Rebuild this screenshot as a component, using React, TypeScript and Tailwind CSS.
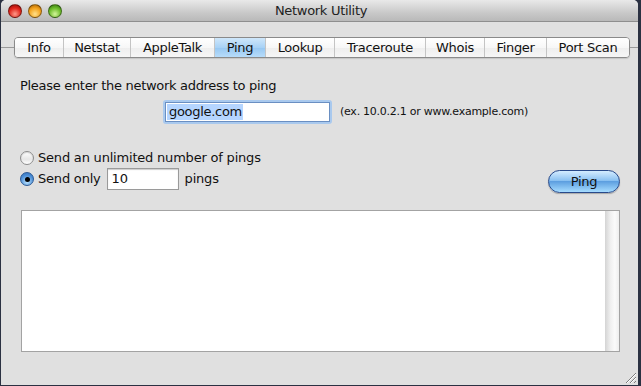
const tabs = [
  { label: "Info", w: "w-[48px]" },
  { label: "Netstat", w: "w-[67px]" },
  { label: "AppleTalk", w: "w-[84px]" },
  { label: "Ping", w: "w-[51px]", active: true },
  { label: "Lookup", w: "w-[69px]" },
  { label: "Traceroute", w: "w-[91px]" },
  { label: "Whois", w: "w-[59px]" },
  { label: "Finger", w: "w-[62px]" },
  { label: "Port Scan", w: "w-[83px]" },
];

function Light({ color }: { color: string }) {
  return <div className={`h-[14px] w-[14px] rounded-full border border-black/40 ${color}`} />;
}

function Radio({ checked }: { checked?: boolean }) {
  if (checked) {
    return (
      <div className="flex h-[14px] w-[14px] items-center justify-center rounded-full border border-[#2d5a95] bg-[radial-gradient(circle_at_50%_75%,#b9e2ff,#4d8fd6_60%,#2f6cb8)]">
        <div className="h-[5px] w-[5px] rounded-full bg-black" />
      </div>
    );
  }
  return (
    <div className="h-[14px] w-[14px] rounded-full border border-[#8d8d8d] bg-[linear-gradient(#ffffff,#e6e6e6_60%,#ffffff)] shadow-[inset_0_1px_1px_rgba(0,0,0,0.15)]" />
  );
}

export default function App() {
  return (
    <div className="h-[386px] w-[641px] bg-[#2b3142] font-['DejaVu_Sans',sans-serif] text-[#111]">
      <div className="relative ml-[1px] flex h-[385px] w-[637px] flex-col overflow-hidden rounded-t-[5px] bg-[#e0e0e0]">
        {/* Title bar */}
        <div className="relative flex h-[22px] items-center border-b border-[#8e8e8e] bg-[linear-gradient(#e9e9e9,#c9c9c9_60%,#b9b9b9)] pl-[7px]">
          <div className="flex gap-[6px]">
            <Light color="bg-[radial-gradient(circle_at_50%_75%,#ff9a8a,#e0251b_55%,#8c0a06)]" />
            <Light color="bg-[radial-gradient(circle_at_50%_75%,#ffe08a,#f3a21c_55%,#a05a00)]" />
            <Light color="bg-[radial-gradient(circle_at_50%_75%,#d3f59a,#6cbc2a_55%,#2f6d0c)]" />
          </div>
          <div className="flex-1 pr-[58px] text-center text-[13px] tracking-[-0.3px] text-[#222]">
            Network Utility
          </div>
        </div>

        {/* Tabs */}
        <div className="mt-[15px] flex items-center">
          <div className="h-px w-[13px] bg-[#9a9a9a]" />
          <div className="flex h-[21px] overflow-hidden rounded-[4px] border border-[#8a8a8a] shadow-[0_1px_1px_rgba(0,0,0,0.12)]">
            {tabs.map((t, i) => (
              <div
                key={t.label}
                className={`flex items-center justify-center text-[13px] tracking-[-0.3px] ${t.w} ${
                  i > 0 ? "border-l border-[#c4c4c4]" : ""
                } ${
                  t.active
                    ? "bg-[linear-gradient(#cfe7fb,#a8d2f6_50%,#96c7f2_51%,#b7dcfa)]"
                    : "bg-[linear-gradient(#ffffff,#f7f7f7_50%,#eeeeee_51%,#f6f6f6)]"
                }`}
              >
                {t.label}
              </div>
            ))}
          </div>
          <div className="h-px flex-1 bg-[#9a9a9a]" />
        </div>

        {/* Address */}
        <div className="ml-[19px] mt-[20px] text-[13px] leading-[16px] tracking-[-0.3px]">
          Please enter the network address to ping
        </div>
        <div className="mt-[6px] flex items-center">
          <div className="ml-[162px] h-[24px] w-[169px] rounded-[3px] bg-[#a9c9ee] p-[2px]">
            <div className="flex h-full items-center border border-[#6a8fc2] bg-white pl-[1px]">
              <span className="bg-[#b5d5ff] pl-[2px] pr-[1px] text-[13px] leading-[16px] tracking-[-0.3px]">google.com</span>
            </div>
          </div>
          <div className="ml-[8px] text-[11px] tracking-[-0.25px]">(ex. 10.0.2.1 or www.example.com)</div>
        </div>

        {/* Ping count */}
        <div className="ml-[19px] mt-[26px] flex h-[16px] items-center gap-[4px] text-[13px] tracking-[-0.2px]">
          <Radio />
          <span>Send an unlimited number of pings</span>
        </div>
        <div className="mt-[2px] flex h-[26px] items-start">
          <div className="ml-[19px] flex h-[22px] items-center text-[13px] tracking-[-0.2px]">
            <Radio checked />
            <span className="ml-[4px]">Send only</span>
            <div className="ml-[6px] flex h-[22px] w-[72px] items-center border border-[#9a9a9a] bg-white pl-[4px] shadow-[inset_0_1px_1px_rgba(0,0,0,0.2)]">
              10
            </div>
            <span className="ml-[6px]">pings</span>
          </div>
          <div className="ml-auto mr-[18px] mt-[2px] flex h-[23px] w-[72px] items-center justify-center rounded-full border border-[#28498a] bg-[linear-gradient(#d4ecff,#8cc2f2_45%,#5d9fe0_50%,#a6dcff)] text-[13px] tracking-[-0.3px] shadow-[0_1px_1px_rgba(0,0,0,0.25)]">
            Ping
          </div>
        </div>

        {/* Output */}
        <div className="ml-[20px] mr-[18px] mt-[16px] flex h-[142px] border border-[#a3a3a3]">
          <div className="flex-1 bg-white" />
          <div className="w-[14px] bg-[linear-gradient(to_right,#d4d4d4,#f0f0f0_40%,#fbfbfb_70%,#eeeeee)]" />
        </div>

        {/* Resize grip */}
        <svg className="absolute bottom-[1px] right-[1px]" width="13" height="13" viewBox="0 0 13 13">
          <path d="M12 2L2 12M12 6L6 12M12 10L10 12" stroke="#7d7d7d" strokeWidth="1" />
          <path d="M12 3L3 12M12 7L7 12" stroke="#ffffff" strokeWidth="1" />
        </svg>
      </div>
    </div>
  );
}
